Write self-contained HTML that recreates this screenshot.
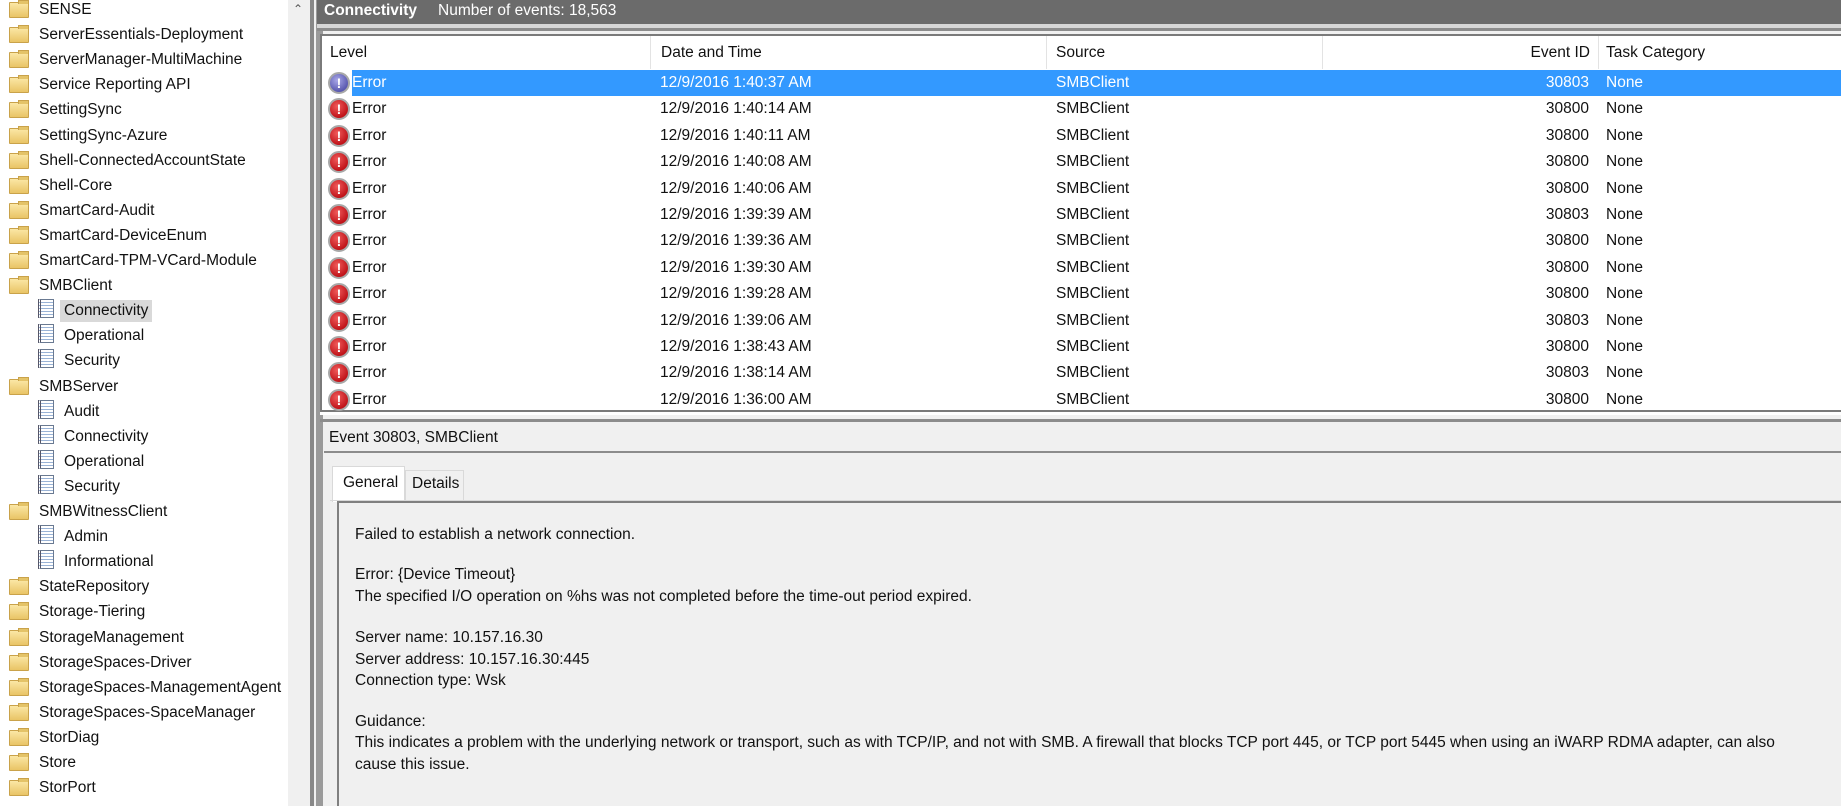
<!DOCTYPE html>
<html><head><meta charset="utf-8"><style>
*{margin:0;padding:0;box-sizing:border-box}
body{width:1841px;height:806px;overflow:hidden;background:#f0f0f0;font-family:"Liberation Sans",sans-serif;font-size:15.5px;color:#111;position:relative}
.abs{position:absolute}
#left{left:0;top:0;width:288px;height:806px;background:#fff}
.tr{position:absolute;height:25px;line-height:25px;white-space:nowrap}
.fold{position:absolute;width:20px;height:16px;top:4px;background:linear-gradient(#fbe7a6,#e9c466);border:1px solid #c9a24a;border-radius:1px}
.fold:before{content:"";position:absolute;left:8px;top:-3px;width:9px;height:3px;background:#e4c368;border:1px solid #c9a24a;border-bottom:none}
.log{position:absolute;width:16px;height:19px;top:3px;background:repeating-linear-gradient(#fff 0 2px,#9ab3d6 2px 3px);border:1px solid #6a7a92;border-left:3px double #556}
#hdr{left:317px;top:0;width:1524px;height:24px;background:#6b6b6b;color:#fff;line-height:22px}
#tbl{left:320px;top:34px;width:1521px;height:378px;background:#fff;border:2px solid #7a7a7a;border-right:none}
.th{position:absolute;top:0;height:33px;line-height:33px;border-right:1px solid #e3e3e3}
.row{position:absolute;left:0;width:1521px;height:26px;line-height:26px}
.row span{position:absolute}
.ic{position:absolute;left:6px;top:2px;width:22px;height:22px;border-radius:50%;background:radial-gradient(circle at 40% 35%,#f05a5a,#c0141a 70%);border:2px solid #a8a8a8;color:#fff;font-weight:bold;font-size:14px;line-height:18px;text-align:center}
.sel{background:#3399ff;color:#fff}
#det{left:337px;top:501px;width:1504px;height:305px;border:2px solid #808080;border-right:none;border-bottom:none}
.tx{position:absolute;left:16px;white-space:nowrap}
</style></head><body>
<div id="left" class="abs"></div>
<div class="abs" style="left:288px;top:0;width:20px;height:806px;background:#f0f0f0;font-size:12px;color:#555;text-align:center;line-height:18px">&#8963;</div>
<div class="abs" style="left:310px;top:0;width:4px;height:806px;background:#888"></div>
<div class="abs" style="left:316px;top:0;width:7px;height:806px;background:#9a9a9a"></div>
<div id="hdr" class="abs"><b style="position:absolute;left:7px">Connectivity</b><span style="position:absolute;left:121px">Number of events: 18,563</span></div>
<div class="abs" style="left:317px;top:24px;width:1524px;height:4px;background:#d6d6d6"></div>
<div class="abs" style="left:317px;top:28px;width:1524px;height:3px;background:#8c8c8c"></div>
<div id="tbl" class="abs">
<div class="th" style="left:0;width:329px;padding-left:8px">Level</div>
<div class="th" style="left:329px;width:396px;padding-left:10px">Date and Time</div>
<div class="th" style="left:725px;width:276px;padding-left:9px">Source</div>
<div class="th" style="left:1001px;width:276px;text-align:right;padding-right:8px">Event ID</div>
<div class="th" style="left:1277px;width:244px;padding-left:7px;border:none">Task Category</div>
<div id="rows"></div>
</div>
<div class="abs" style="left:320px;top:412px;width:1521px;height:3px;background:#fff"></div>
<div class="abs" style="left:320px;top:419px;width:1521px;height:3px;background:#8c8c8c"></div>
<div class="abs" style="left:329px;top:429px">Event 30803, SMBClient</div>
<div class="abs" style="left:324px;top:451px;width:1517px;height:2px;background:#8c8c8c"></div>
<div class="abs" style="left:332px;top:466px;width:73px;height:36px;background:#fff;border:1px solid #d9d9d9;border-bottom:none;padding:7px 0 0 10px">General</div>
<div class="abs" style="left:405px;top:470px;width:59px;height:31px;background:#f0f0f0;border:1px solid #d9d9d9;padding:4px 0 0 6px">Details</div>
<div class="abs" style="left:330px;top:500px;width:1511px;height:1px;background:#d9d9d9"></div>
<div id="det" class="abs">
<div class="tx" style="top:23px">Failed to establish a network connection.</div>
<div class="tx" style="top:63px">Error: {Device Timeout}</div>
<div class="tx" style="top:85px">The specified I/O operation on %hs was not completed before the time-out period expired.</div>
<div class="tx" style="top:126px">Server name: 10.157.16.30</div>
<div class="tx" style="top:148px">Server address: 10.157.16.30:445</div>
<div class="tx" style="top:169px">Connection type: Wsk</div>
<div class="tx" style="top:210px">Guidance:</div>
<div class="tx" style="top:231px">This indicates a problem with the underlying network or transport, such as with TCP/IP, and not with SMB. A firewall that blocks TCP port 445, or TCP port 5445 when using an iWARP RDMA adapter, can also</div>
<div class="tx" style="top:253px">cause this issue.</div>
</div>
<script>
var tree=[["f","SENSE"],["f","ServerEssentials-Deployment"],["f","ServerManager-MultiMachine"],["f","Service Reporting API"],["f","SettingSync"],["f","SettingSync-Azure"],["f","Shell-ConnectedAccountState"],["f","Shell-Core"],["f","SmartCard-Audit"],["f","SmartCard-DeviceEnum"],["f","SmartCard-TPM-VCard-Module"],["f","SMBClient"],["l","Connectivity",1],["l","Operational"],["l","Security"],["f","SMBServer"],["l","Audit"],["l","Connectivity"],["l","Operational"],["l","Security"],["f","SMBWitnessClient"],["l","Admin"],["l","Informational"],["f","StateRepository"],["f","Storage-Tiering"],["f","StorageManagement"],["f","StorageSpaces-Driver"],["f","StorageSpaces-ManagementAgent"],["f","StorageSpaces-SpaceManager"],["f","StorDiag"],["f","Store"],["f","StorPort"]];
var h="";tree.forEach(function(t,i){var y=-3+i*25.1;
if(t[0]=="f"){h+='<div class="fold" style="left:9px;top:'+(y+5)+'px"></div><div class="tr" style="left:39px;top:'+y+'px">'+t[1]+'</div>';}
else{h+='<div class="log" style="left:38px;top:'+(y+1)+'px"></div><div class="tr" style="left:60px;top:'+y+'px;padding:0 4px;'+(t[2]?'background:#d9d9d9;height:22px;line-height:22px;margin-top:2px':'')+'">'+t[1]+'</div>';}});
document.getElementById("left").innerHTML=h;
var d=[["1:40:37","30803"],["1:40:14","30800"],["1:40:11","30800"],["1:40:08","30800"],["1:40:06","30800"],["1:39:39","30803"],["1:39:36","30800"],["1:39:30","30800"],["1:39:28","30800"],["1:39:06","30803"],["1:38:43","30800"],["1:38:14","30803"],["1:36:00","30800"]];
var r="";d.forEach(function(x,i){var y=34+i*26.4;
r+='<div class="row" style="top:'+y+'px"><div class="ic"'+(i==0?' style="background:radial-gradient(circle at 40% 35%,#a9a8e8,#5a59b0 70%)"':'')+'>!</div><div style="position:absolute;left:30px;right:0;top:0;bottom:0" class="'+(i==0?'sel':'')+'"><span style="left:0">Error</span><span style="left:308px">12/9/2016 '+x[0]+' AM</span><span style="left:704px">SMBClient</span><span style="left:1160px;width:77px;text-align:right">'+x[1]+'</span><span style="left:1254px">None</span></div></div>';});
document.getElementById("rows").innerHTML=r;
</script>
</body></html>
